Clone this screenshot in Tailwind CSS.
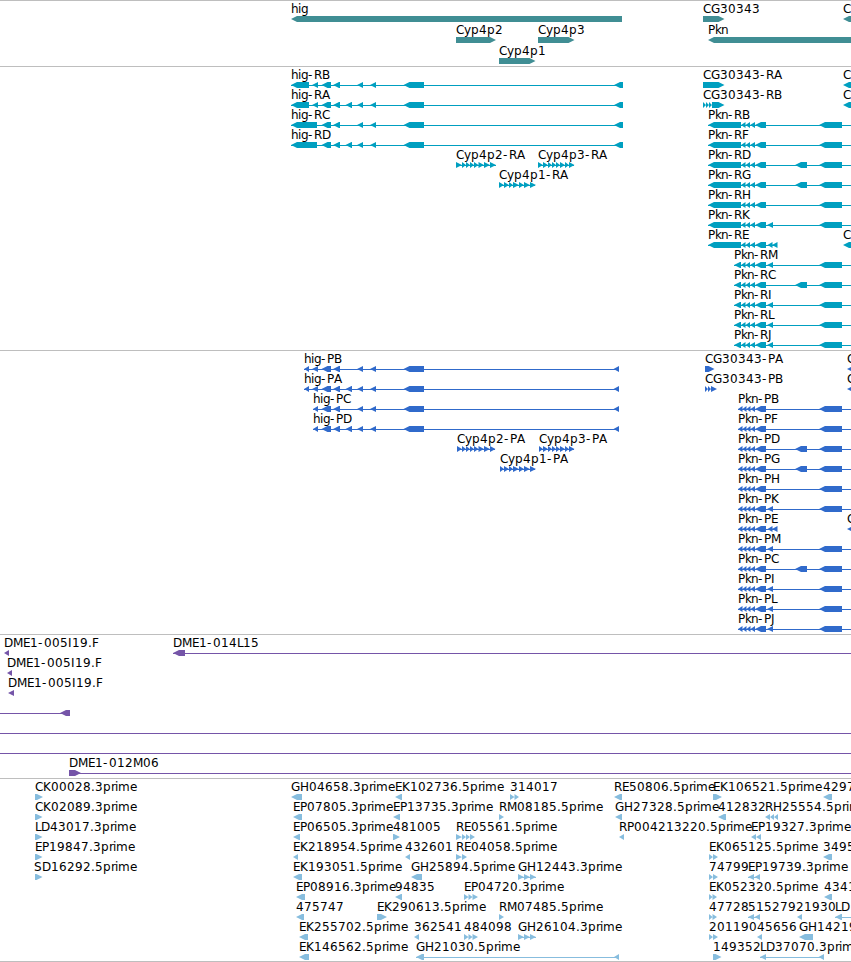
<!DOCTYPE html>
<html lang="en">
<head>
<meta charset="utf-8">
<title>Genome browser</title>
<script src="https://cdn.jsdelivr.net/npm/@tailwindcss/browser@4"></script>
</head>
<body class="bg-white overflow-hidden">
<main class="flex flex-col w-[851px] h-[962px] overflow-hidden border-b border-[#bebebe] text-black font-['DejaVu_Sans',sans-serif] text-[12px]">
  <section class="h-[66px] border-t border-[#bebebe] text-[#408e94]" data-track="genes"></section>
  <section class="h-[284px] border-t border-[#bebebe] text-[#009fc0]" data-track="transcripts"></section>
  <section class="h-[284px] border-t border-[#bebebe] text-[#306acb]" data-track="proteins"></section>
  <section class="h-[144px] border-t border-[#bebebe] text-[#7555a8]" data-track="clones"></section>
  <section class="h-[183px] border-t border-[#bebebe] text-[#87bdde]" data-track="ests"></section>
</main>
<script>
// Feature: [row, label, labelX, direction, [[start, end], ...], lineStart?, lineEnd?]
const chain = (...p) => p.slice(1).map((e, i) => [p[i], e]);
const END = 860;

const genes = [
  [0,'hig',291,'L',[[291,622]]], [1,'Cyp4p2',456,'R',[[456,496]]], [1,'Cyp4p3',538,'R',[[538,574.5]]],
  [2,'Cyp4p1',499,'R',[[499,535.5]]], [0,'CG30343',703,'R',[[703,724.5]]],
  [1,'Pkn',708,'L',[[708,END]]], [0,'C',843,'L',[[843,END]]]
];

const higTail = [[357,363],[370,376],[403.5,424]];
const mid = [[321.5,331],[333,340]];
const extra = [[345.5,352]];
const T = [[614,623]], P = [[613.5,619]];
const small = [[312,318]];
const transcripts = [
  [0,'hig-RB',291,'L',[[291,309],...small,...mid,...higTail,...T],291,623],
  [1,'hig-RA',291,'L',[[291,309],...small,...mid,...extra,...higTail,...T],291,623],
  [2,'hig-RC',291,'L',[[291,317],...mid,...higTail,...T],291,623],
  [3,'hig-RD',291,'L',[[291,317],...mid,...extra,...higTail,...T],291,623],
  [4,'Cyp4p2-RA',456,'R',chain(456,462,466,470,474,478.5,484,490,496),456,496],
  [4,'Cyp4p3-RA',538,'R',chain(538,543,548,552,556,560,565,569,574.5),538,574],
  [5,'Cyp4p1-RA',499,'R',chain(499,504,509,513,519,524,530,536),499,535],
  [0,'CG30343-RA',703,'R',[[703,724.5]]],
  [1,'CG30343-RB',703,'R',chain(703,706,709,712,724.5)],
  [0,'C',843,'L',[[843,END]]], [1,'C',843,'L',[[843,END]]], [8,'C',843,'L',[[843,END]]]
];
const proteins = [
  [0,'hig-PB',304,'L',[[304,309],...small,...mid,...higTail,...P],304,619],
  [1,'hig-PA',304,'L',[[304,309],...small,...mid,...extra,...higTail,...P],304,619],
  [2,'hig-PC',313,'L',[[313,318],...mid,...higTail,...P],313,619],
  [3,'hig-PD',313,'L',[[313,318],...mid,...extra,...higTail,...P],313,619],
  [4,'Cyp4p2-PA',457,'R',chain(457,462,466,470,474,478.5,484,490,495.5),457,495],
  [4,'Cyp4p3-PA',539,'R',chain(539,543,548,552,556,560,565,569,574.5),539,574],
  [5,'Cyp4p1-PA',500,'R',chain(500,504,509,513,519,524,530,536),500,535],
  [0,'CG30343-PA',705,'R',[[705,714.5]]],
  [1,'CG30343-PB',705,'R',chain(705,708,711,717)],
  [0,'C',847,'L',[[847,END]]], [1,'C',847,'L',[[847,END]]], [8,'C',847,'L',[[847,END]]]
];
// Isoforms of Pkn share most exons; x = the additional exon each one carries.
[...'BFDGHKEMCILJ'].forEach((c, i) => {
  const x = 'DGC'.includes(c) ? [[795,807]] : c === 'E' ? [[767.5,772.5],[772,777.5]] : 'KMILJ'.includes(c) ? [[767,773]] : [];
  const far = c === 'E' ? [] : [[819,842]];
  const end = c === 'E' ? 777 : END;
  const s = i < 7 ? 708 : 734;
  transcripts.push([i + 2, 'Pkn-R' + c, s, 'L', [[s,741],...chain(741,745.5,750,755,766),...x,...far], s, end]);
  proteins.push([i + 2, 'Pkn-P' + c, 738, 'L', [...chain(738,742.5,746.5,750.5,755,766),...x,...far], 738, end]);
});

const clones = [
  [0,'DME1-005I19.F',4,'L',[[4,9]]], [1,'DME1-005I19.F',7,'L',[[7,12]]], [2,'DME1-005I19.F',8,'L',[[8,14]]],
  [0,'DME1-014L15',173,'L',[[173,185]],173,END],
  [3,'',0,'L',[[60,70]],0,70], [4,'',0,'L',[],0,END], [5,'',0,'L',[],0,END],
  [6,'DME1-012M06',69,'R',[[69,81]],69,END]
];

const ests = [
  [0,'CK00028.3prime',35,'R',[[35,43]]], [0,'GH04658.3prime',291,'L',[[291,302]]], [0,'EK102736.5prime',395,'L',[[395,402]]],
  [0,'314017',510,'R',chain(510,514.5,519)], [0,'RE50806.5prime',614,'L',[[614,622]]], [0,'EK106521.5prime',713,'R',[[713,722]]], [0,'4297',823,'L',[[823,832]]],
  [1,'CK02089.3prime',35,'R',[[35,42.5]]], [1,'EP07805.3prime',293,'L',[[293,302]]], [1,'EP13735.3prime',393,'L',[[393,400]]],
  [1,'RM08185.5prime',499,'R',[[499,504]]], [1,'GH27328.5prime',615,'L',[[615,622]]], [1,'412832',718,'L',[[718,726]]], [1,'RH25554.5prime',765,'L',chain(765,770,774,778)],
  [2,'LD43017.3prime',35,'R',[[35,42.5]]], [2,'EP06505.3prime',293,'L',[[293,300]]], [2,'481005',393,'R',[[393,400]]],
  [2,'RE05561.5prime',456,'R',chain(456,462,466,470,475)], [2,'RP004213220.5prime',619,'L',[[619,624]]], [2,'EP19327.3prime',751,'L',chain(751,756,761)],
  [3,'EP19847.3prime',35,'R',[[35,42.5]]], [3,'EK218954.5prime',293,'L',[[293,298]]], [3,'432601',405,'L',[[405,410]]],
  [3,'RE04058.5prime',456,'R',chain(456,462,467)], [3,'EK065125.5prime',709,'R',chain(709,713,718)], [3,'3495',823,'L',[[823,832]]],
  [4,'SD16292.5prime',34,'R',[[35,42.5]]], [4,'EK193051.5prime',293,'L',[[293,302]]], [4,'GH25894.5prime',411,'L',[[411,422]]],
  [4,'GH12443.3prime',518,'R',chain(518,524,530,536),518,536], [4,'74799',709,'R',chain(709,713,718)], [4,'EP19739.3prime',748,'L',[[748,754],[754.5,760]],748,760],
  [5,'EP08916.3prime',296,'L',[[296,305]]], [5,'94835',395,'L',[[395,402]]], [5,'EP04720.3prime',464,'R',chain(464,468.5,472.5,478)],
  [5,'EK052320.5prime',709,'R',chain(709,712.5,717)], [5,'4341',824,'L',[[824,832]]],
  [6,'475747',296,'L',[[296,304]]], [6,'EK290613.5prime',377,'R',[[377,387]]], [6,'RM07485.5prime',499,'R',[[499,504]]],
  [6,'47728',709,'R',chain(709,712.5,717)], [6,'515279',748,'L',[[748,754],[754.5,760]],748,760], [6,'21930',796,'L',[[797,802]]], [6,'LD',835,'L',[[835,842]],835,END],
  [7,'EK255702.5prime',299,'L',[[299,308]]], [7,'362541',414,'L',[[414,419]]], [7,'484098',464,'R',chain(464,468.5,472.5,478)],
  [7,'GH26104.3prime',518,'R',chain(518,524,530,536),518,536], [7,'201190',709,'R',chain(709,713,718)], [7,'45656',757,'L',[[757,762]]], [7,'GH1421',799,'L',[[799,813]]],
  [8,'EK146562.5prime',299,'L',[[299,309]]], [8,'GH21030.5prime',416,'L',[[416,424],[614,619]],416,619],
  [8,'149352',713,'R',[[713,721.5]]], [8,'LD37070.3prime',760,'L',[[760,766],[818.5,824]],760,824]
];
ests.find(f => f[1] === 'GH1421')[1] = 'GH14219';

// Whole-pixel advance of each glyph.
const ADV = {C:8,G:9,H:9,E:7,K:8,P:7,R:8,L:6,D:9,S:8,M:10,F:7,I:4,J:4,B:8,A:8,'.':4,'-':6,p:8,r:4,i:3,m:12,e:7,h:7,g:7,y:7,k:6,n:7};

function arrow(a, b, y, dir) {
  const t = Math.min(6, b - a);
  return dir === 'L'
    ? `M${a} ${y+3}L${a+t} ${y}H${b}V${y+6}H${a+t}Z`
    : `M${b} ${y+3}L${b-t} ${y}H${a}V${y+6}H${b-t}Z`;
}
function draw(name, height, first, pitch, data) {
  let out = '';
  for (const [row, label, lx, dir, boxes, l1, l2] of data) {
    const y = first + row * pitch;
    if (l1 !== undefined) out += `<rect x="${l1}" y="${y+3}" width="${l2-l1}" height="1"/>`;
    if (boxes.length) out += `<path d="${boxes.map(([a, b]) => arrow(a, b, y, dir)).join('')}"/>`;
    if (label) {
      let x = lx;
      const xs = [...label].map(c => { const v = x; x += ADV[c] || 8; return v; });
      out += `<text fill="black" x="${xs.join(' ')}" y="${y-3}">${label}</text>`;
    }
  }
  document.querySelector(`[data-track="${name}"]`).innerHTML =
    `<svg class="block" width="851" height="${height}" fill="currentColor">${out}</svg>`;
}
draw('genes', 65, 15, 21, genes);
draw('transcripts', 283, 15, 20, transcripts);
draw('proteins', 283, 15, 20, proteins);
draw('clones', 143, 15, 20, clones);
draw('ests', 182, 15, 20, ests);
</script>
</body>
</html>
